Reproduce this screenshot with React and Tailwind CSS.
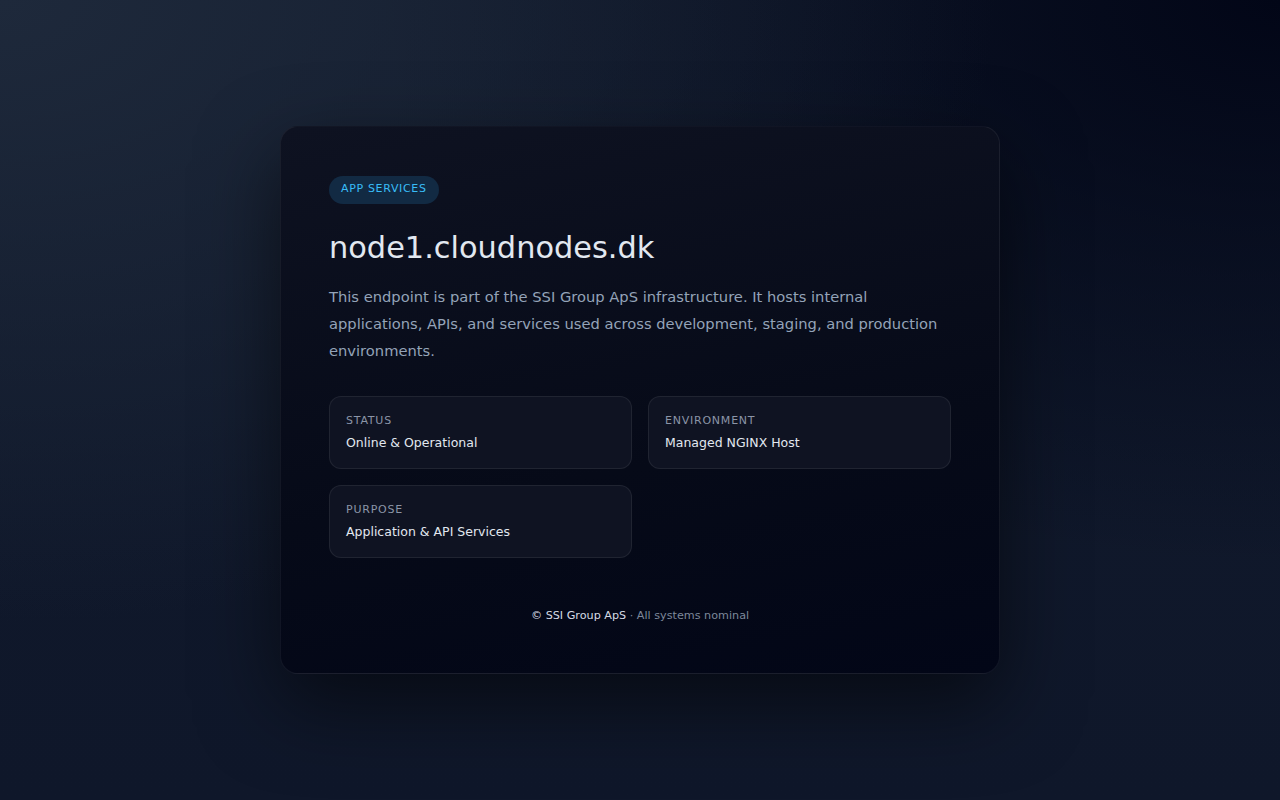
const InfoCard = ({ label, value }) => (
  <div className="rounded-xl border border-white/[0.07] bg-[#0f1322] px-4 pt-4 pb-4">
    <div className="text-[11px] uppercase tracking-[0.07em] text-[#8b95a7] leading-4">{label}</div>
    <div className="mt-[5px] text-[12.5px] leading-[18px] text-[#e2e8f0]">{value}</div>
  </div>
);

export default function App() {
  return (
    <div
      className="min-h-screen flex items-center justify-center bg-[#0e1628] bg-[radial-gradient(ellipse_at_0%_0%,#1e293b_0%,transparent_55%),radial-gradient(ellipse_at_100%_0%,#020617_0%,transparent_50%),linear-gradient(180deg,#111a2c_0%,#0f172a_100%)] font-['DejaVu_Sans',sans-serif]"
    >
      <div className="w-[720px] rounded-[18px] border border-white/[0.06] bg-[linear-gradient(170deg,#0e1221_0%,#060a18_60%,#020617_100%)] p-12 shadow-[0_30px_80px_rgba(0,0,0,0.55)]">
        <span className="inline-flex h-7 items-center rounded-full bg-[#122a43] px-3 text-[11px] tracking-[0.06em] text-[#38bdf8]">
          APP SERVICES
        </span>

        <h1 className="mt-6 text-[30.4px] leading-[40px] font-normal text-[#e2e8f0]">
          node1.cloudnodes.dk
        </h1>

        <p className="mt-[15px] text-[14.7px] leading-[27px] text-[#94a3b8]">
          This endpoint is part of the SSI Group ApS infrastructure. It hosts internal
          applications, APIs, and services used across development, staging, and production
          environments.
        </p>

        <div className="mt-8 grid grid-cols-2 gap-4">
          <InfoCard label="Status" value="Online & Operational" />
          <InfoCard label="Environment" value="Managed NGINX Host" />
          <InfoCard label="Purpose" value="Application & API Services" />
        </div>

        <div className="mt-[49px] text-center text-[11.2px] leading-[18px] text-[#7c879a]">
          <span className="text-[#d5dbe5]">© SSI Group ApS</span> · All systems nominal
        </div>
      </div>
    </div>
  );
}
